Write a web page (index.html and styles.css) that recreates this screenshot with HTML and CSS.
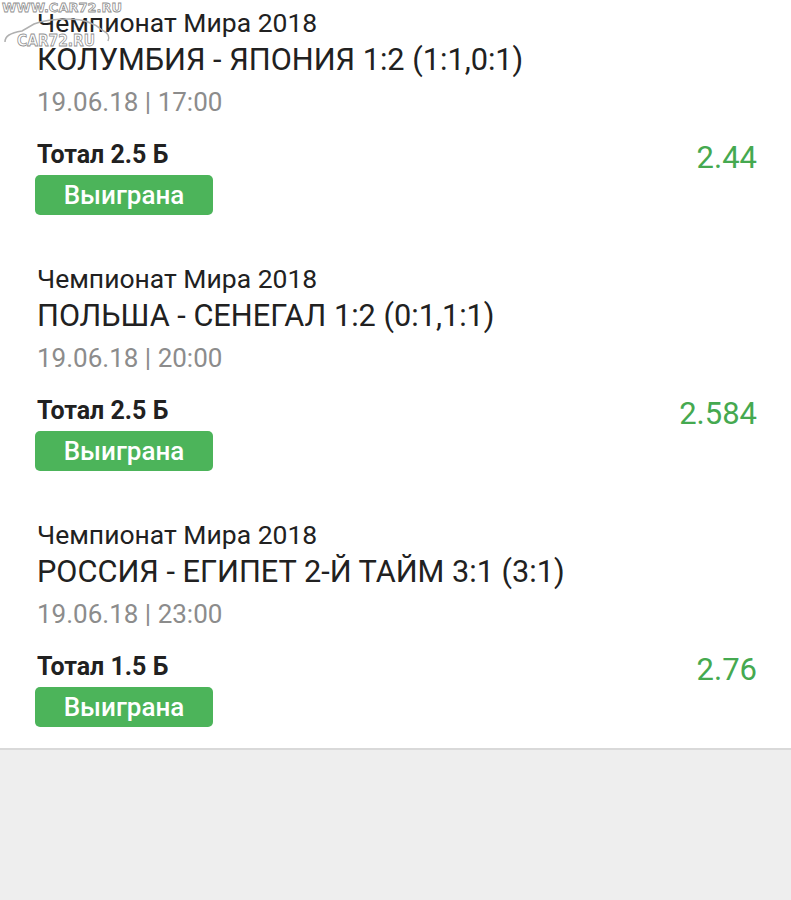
FILE: index.html
```html
<!DOCTYPE html>
<html lang="ru">
<head>
  <meta charset="UTF-8">
  <meta name="viewport" content="width=device-width, initial-scale=1.0">
  <title>Ставки</title>
  <link rel="stylesheet" href="styles.css">
</head>
<body>
<div class="watermark">
  <svg width="130" height="50" viewBox="0 0 130 50">
    <text x="2" y="12" class="wm-top" textLength="120" lengthAdjust="spacingAndGlyphs">WWW.CAR72.RU</text>
    <path class="wm-car" d="M5 42 C5 36 10 33 22 31 L34 24 C44 20 56 19 70 19 C84 19 94 23 102 30 C108 33 110 36 108 41"/>
    <text x="17" y="46" class="wm-bottom" textLength="78" lengthAdjust="spacingAndGlyphs">CAR72.RU</text>
  </svg>
</div>

<div class="card">
  <div class="bet">
    <div class="league">Чемпионат Мира 2018</div>
    <div class="match">КОЛУМБИЯ - ЯПОНИЯ 1:2 (1:1,0:1)</div>
    <div class="date">19.06.18 | 17:00</div>
    <div class="row">
      <span class="outcome">Тотал 2.5 Б</span>
      <span class="odds">2.44</span>
    </div>
    <div class="status">Выиграна</div>
  </div>

  <div class="bet">
    <div class="league">Чемпионат Мира 2018</div>
    <div class="match">ПОЛЬША - СЕНЕГАЛ 1:2 (0:1,1:1)</div>
    <div class="date">19.06.18 | 20:00</div>
    <div class="row">
      <span class="outcome">Тотал 2.5 Б</span>
      <span class="odds">2.584</span>
    </div>
    <div class="status">Выиграна</div>
  </div>

  <div class="bet">
    <div class="league">Чемпионат Мира 2018</div>
    <div class="match">РОССИЯ - ЕГИПЕТ 2-Й ТАЙМ 3:1 (3:1)</div>
    <div class="date">19.06.18 | 23:00</div>
    <div class="row">
      <span class="outcome">Тотал 1.5 Б</span>
      <span class="odds">2.76</span>
    </div>
    <div class="status">Выиграна</div>
  </div>
</div>
</body>
</html>
```

FILE: styles.css
```css
body {
  margin: 0;
  background-color: #eeeeee;
  font-family: Roboto, "Noto Sans", sans-serif;
  color: #212121;
}
.card {
  background: #ffffff;
  border-bottom: 2px solid #d9d9d9;
}
.bet {
  padding: 8px 34px 41px 37px;
}
.bet:last-child {
  padding-bottom: 21px;
}
.league {
  font-size: 26.5px;
  line-height: 30px;
}
.match {
  font-size: 30.7px;
  line-height: 44px;
}
.date {
  font-size: 26px;
  line-height: 40px;
  color: #8c8c8c;
}
.row {
  display: flex;
  justify-content: space-between;
  align-items: center;
  margin-top: 18px;
  height: 28px;
}
.outcome {
  font-size: 25px;
  font-weight: bold;
}
.odds {
  font-size: 31px;
  color: #45a950;
  margin-top: 6px;
}
.status {
  display: inline-block;
  margin: 7px 0 0 -2px;
  width: 178px;
  height: 40px;
  line-height: 40px;
  border-radius: 5px;
  background-color: #4cb45a;
  color: #ffffff;
  font-size: 26px;
  font-weight: 500;
  text-align: center;
}
.watermark {
  position: absolute;
  top: 0;
  left: 0;
}
.wm-top, .wm-bottom {
  font-family: "DejaVu Sans", sans-serif;
  font-weight: bold;
  fill: #ffffff;
  stroke: #8f8f8f;
  stroke-width: 0.8;
}
.wm-top {
  font-size: 13px;
}
.wm-bottom {
  font-size: 15px;
}
.wm-car {
  fill: none;
  stroke: #b0b0b0;
  stroke-width: 1.5;
}
```
